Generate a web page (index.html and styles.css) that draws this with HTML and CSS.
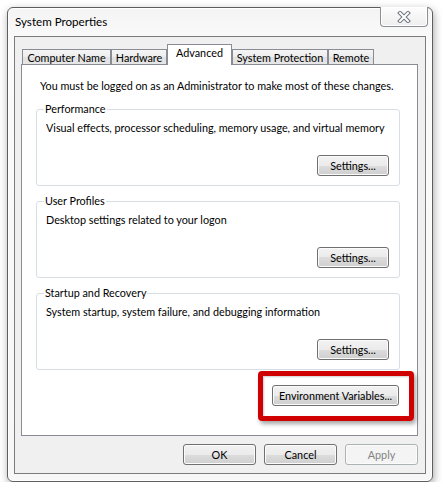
FILE: index.html
```html
<!DOCTYPE html>
<html>
<head>
<meta charset="utf-8">
<title>System Properties</title>
<link rel="stylesheet" href="styles.css">
</head>
<body>
<div class="window">
  <div class="titlebar">
    <span class="title">System Properties</span>
    <button class="close" aria-label="Close">
      <svg width="14" height="12" viewBox="0 0 14 12">
        <path d="M3 2 L11 10 M11 2 L3 10" stroke="#6c747e" stroke-width="4" stroke-linecap="square" fill="none"/>
        <path d="M3 2 L11 10 M11 2 L3 10" stroke="#ffffff" stroke-width="2" stroke-linecap="square" fill="none"/>
      </svg>
    </button>
  </div>
  <div class="client">
    <div class="tabs">
      <div class="tab w-cn">Computer Name</div>
      <div class="tab w-hw">Hardware</div>
      <div class="tab w-adv active">Advanced</div>
      <div class="tab w-sp">System Protection</div>
      <div class="tab w-rm">Remote</div>
    </div>
    <div class="panel">
      <p class="intro">You must be logged on as an Administrator to make most of these changes.</p>
      <fieldset class="group">
        <legend>Performance</legend>
        <p class="desc">Visual effects, processor scheduling, memory usage, and virtual memory</p>
        <div class="group-actions"><button class="btn settings">Settings...</button></div>
      </fieldset>
      <fieldset class="group">
        <legend>User Profiles</legend>
        <p class="desc">Desktop settings related to your logon</p>
        <div class="group-actions"><button class="btn settings">Settings...</button></div>
      </fieldset>
      <fieldset class="group">
        <legend>Startup and Recovery</legend>
        <p class="desc">System startup, system failure, and debugging information</p>
        <div class="group-actions"><button class="btn settings">Settings...</button></div>
      </fieldset>
      <div class="env-row">
        <div class="env-wrap">
          <button class="btn env">Environment Variables...</button>
          <span class="highlight"></span>
        </div>
      </div>
    </div>
    <div class="actions">
      <button class="btn dlg">OK</button>
      <button class="btn dlg">Cancel</button>
      <button class="btn dlg" disabled>Apply</button>
    </div>
  </div>
</div>
</body>
</html>
```

FILE: styles.css
```css
* { box-sizing: border-box; }
html, body { margin: 0; padding: 0; background: #ffffff; }
body {
  font-family: "Lato", "Open Sans", sans-serif;
  font-size: 10.8px;
  color: #000;
}
.window {
  margin: 7px 0 0 7px;
  width: 426px;
  height: 475px;
  border: 1px solid #5e5e5e;
  border-radius: 6px;
  background: linear-gradient(#f4f4f4 0px, #fbfbfb 40px, #f7f7f7 100%);
  box-shadow: 1px 3px 8px rgba(0,0,0,0.35), inset 0 0 0 1px #ffffff;
  padding: 0 6px 7px 6px;
  display: flex;
  flex-direction: column;
}
.titlebar {
  height: 28px;
  display: flex;
  justify-content: space-between;
  align-items: flex-start;
}
.title {
  padding-left: 1px;
  line-height: 28px;
  font-size: 11.6px;
  color: #000;
}
.close {
  width: 48px;
  height: 20px;
  margin: -1px -2px 0 0;
  padding: 0;
  border: 1px solid #8b8f96;
  border-top: none;
  border-radius: 0 0 4px 4px;
  background: linear-gradient(#fdfdfd, #eeeeee);
  box-shadow: inset 0 0 0 1px #ffffff;
  display: flex;
  align-items: center;
  justify-content: center;
}
.client {
  flex: 1;
  border: 1px solid #7c7c7c;
  background: #f0f0f0;
  padding: 7px 7px 0 6px;
  display: flex;
  flex-direction: column;
}
.tabs {
  display: flex;
  align-items: flex-end;
  height: 20px;
  margin-left: 1px;
  position: relative;
  z-index: 1;
}
.tab {
  height: 15px;
  border: 1px solid #898c95;
  border-bottom: none;
  background: linear-gradient(#f5f5f5, #ededed 50%, #e1e1e1 50%, #e6e6e6);
  text-align: center;
  line-height: 15px;
  white-space: nowrap;
}
.tab.active {
  height: 21px;
  margin-bottom: -1px;
  background: #ffffff;
  line-height: 16px;
}
.w-cn { width: 89px; }
.w-hw { width: 56px; }
.w-adv { width: 65px; }
.w-sp { width: 96px; }
.w-rm { width: 46px; }
.panel {
  height: 372px;
  border: 1px solid #898c95;
  background: #ffffff;
  padding: 13px 17px 0 14px;
}
.intro {
  margin: 0 0 7px 4px;
  line-height: 16px;
  white-space: nowrap;
}
.group {
  margin: 0 0 7px 0;
  padding: 0 10px 9px 9px;
  border: 1px solid #d5dfe5;
  border-radius: 3px;
  min-width: 0;
  width: 364px;
}
.group legend {
  margin-left: -2px;
  padding: 0 1px;
  line-height: 16px;
}
.desc {
  margin: 3px 0 0 0;
  line-height: 16px;
  white-space: nowrap;
}
.group-actions {
  display: flex;
  justify-content: flex-end;
  margin-top: 19px;
}
.btn {
  font-family: inherit;
  font-size: 10.8px;
  color: #000;
  height: 21px;
  padding: 0;
  border: 1px solid #707070;
  border-radius: 3px;
  background: linear-gradient(#f2f2f2 0%, #ebebeb 50%, #dddddd 50%, #cfcfcf 100%);
  box-shadow: inset 0 0 0 1px #fbfbfb;
}
.btn:disabled {
  border-color: #adb2b5;
  background: #f4f4f4;
  color: #838383;
}
.settings { width: 72px; }
.env-row {
  display: flex;
  justify-content: flex-end;
  margin-top: 15px;
  padding-right: 1px;
}
.env-wrap { position: relative; }
.env { width: 127px; }
.highlight {
  position: absolute;
  left: -14px;
  top: -14px;
  right: -15px;
  bottom: -15px;
  border: 5px solid #d10000;
  border-radius: 4px;
  box-shadow: 2px 3px 4px rgba(0,0,0,0.35), inset 1px 1px 2px rgba(0,0,0,0.2);
  pointer-events: none;
}
.actions {
  display: flex;
  justify-content: flex-end;
  gap: 8px;
  margin-top: 8px;
}
.dlg { width: 73px; }
```
